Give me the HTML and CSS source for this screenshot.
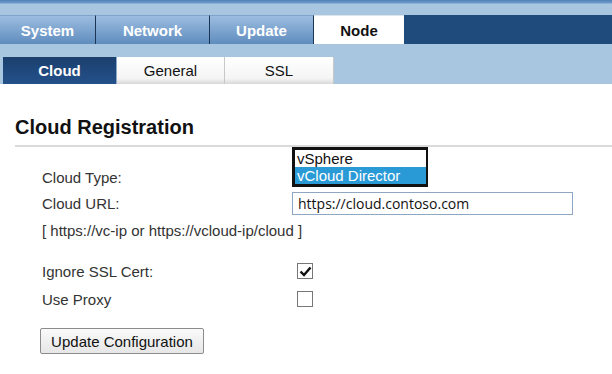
FILE: index.html
```html
<!DOCTYPE html>
<html lang="en">
<head>
  <meta charset="UTF-8">
  <title>Cloud Registration</title>
  <link rel="stylesheet" href="styles.css">
</head>
<body>
  <div class="header">
    <div class="top-strip"></div>
    <div class="main-tabs">
      <div class="tab tab-system">System</div>
      <div class="tab tab-network">Network</div>
      <div class="tab tab-update">Update</div>
      <div class="tab tab-node active">Node</div>
    </div>
    <div class="sub-band">
      <div class="sub-tabs">
        <div class="sub-tab active">Cloud</div>
        <div class="sub-tab">General</div>
        <div class="sub-tab">SSL</div>
      </div>
    </div>
  </div>

  <div class="content">
    <h2>Cloud Registration</h2>

    <div class="form-grid">
      <!-- Cloud type (dropdown shown open) -->
      <div class="label row-type">Cloud Type:</div>
      <div class="control row-type">
        <div class="listbox">
          <div class="option">vSphere</div>
          <div class="option selected">vCloud Director</div>
        </div>
      </div>

      <div class="label row-url">Cloud URL:</div>
      <div class="control row-url">
        <div class="text-input">https://cloud.contoso.com</div>
      </div>

      <div class="label hint">[ https://vc-ip or https://vcloud-ip/cloud ]</div>

      <div class="label row-check first">Ignore SSL Cert:</div>
      <div class="control row-check first">
        <span class="checkbox">
          <svg width="13" height="13" viewBox="0 0 13 13">
            <path d="M1.5 6.5 L5 10 L11.5 2.5" fill="none" stroke="#111" stroke-width="2.4"/>
          </svg>
        </span>
      </div>

      <div class="label row-check">Use Proxy</div>
      <div class="control row-check">
        <span class="checkbox"></span>
      </div>
    </div>

    <button class="submit">Update Configuration</button>
  </div>
</body>
</html>
```

FILE: styles.css
```css
* {
  margin: 0;
  padding: 0;
  box-sizing: border-box;
}

body {
  font-family: 'Liberation Sans', Arial, sans-serif;
  background: #fff;
  color: #333;
  width: 612px;
  height: 374px;
  overflow: hidden;
}

/* Header tabs */
.header {
  background: #a9c6e0;
}

.top-strip {
  height: 15px;
  background: linear-gradient(to bottom, #4f80b6 0, #6f9bcb 3px, #a9c6e0 4px, #a9c6e0 100%);
}

.main-tabs {
  display: flex;
  height: 29px;
  background: #1f4a7c;
}

.tab {
  display: flex;
  align-items: center;
  justify-content: center;
  color: #fff;
  font-weight: bold;
  font-size: 15px;
  background: linear-gradient(to bottom, #9cbde0, #5f8cbe);
  border-right: 1px solid #1c3554;
  border-top: 1px solid #7fa3cc;
}

.tab-system { width: 96px; }
.tab-network { width: 114px; }
.tab-update { width: 104px; }
.tab-node { width: 90px; }

.tab.active {
  background: #fff;
  color: #111;
  border-right: none;
  border-top: 1px solid #dde6ef;
}

.sub-band {
  height: 40px;
  padding: 13px 0 0 3px;
}

.sub-tabs {
  display: flex;
  height: 27px;
}

.sub-tab {
  display: flex;
  align-items: center;
  justify-content: center;
  width: 108px;
  font-size: 15px;
  color: #111;
  background: linear-gradient(to bottom, #ffffff, #f4f4f4 80%, #d8d8d8);
  border-right: 1px solid #c8c8c8;
}

.sub-tab:last-child { width: 109px; }

.sub-tab.active {
  width: 114px;
  color: #fff;
  font-weight: bold;
  background: linear-gradient(to bottom, #1b3f6e, #24518a);
  border-right: 1px solid #8aa8c8;
}

/* Content */
.content {
  padding: 32px 0 0 15px;
}

h2 {
  font-size: 20px;
  font-weight: bold;
  color: #111;
  line-height: 22px;
  padding-bottom: 7px;
  border-bottom: 2px solid #dadada;
}

.form-grid {
  display: grid;
  grid-template-columns: 250px 1fr;
  padding-left: 27px;
}

.label {
  font-size: 15px;
  color: #333;
  display: flex;
  align-items: center;
}

.control {
  display: flex;
  align-items: center;
}

.row-type { height: 42px; }
.label.row-type { align-items: flex-end; padding-bottom: 3px; }
.control.row-type { align-items: flex-start; }

.listbox {
  width: 136px;
  border: 3px solid #111;
  border-right-width: 2px;
  font-size: 15px;
  color: #111;
  line-height: 17px;
}

.option { padding-left: 2px; }

.option.selected {
  background: #2a9ad6;
  color: #fff;
}

.row-url { height: 28px; }

.text-input {
  width: 281px;
  height: 23px;
  border: 1px solid #8ea7c2;
  padding-left: 5px;
  font-family: 'Open Sans', 'DejaVu Sans', sans-serif;
  font-size: 14px;
  line-height: 21px;
  color: #111;
}

.hint {
  grid-column: 1 / 3;
  height: 26px;
}

.row-check { height: 28px; }
.row-check.first { margin-top: 14px; }

.checkbox {
  display: inline-flex;
  align-items: center;
  justify-content: center;
  width: 16px;
  height: 16px;
  margin-left: 5px;
  border: 1px solid #777;
  background: #fff;
}

.submit {
  margin: 15px 0 0 25px;
  width: 164px;
  height: 26px;
  font-family: 'Liberation Sans', Arial, sans-serif;
  font-size: 15px;
  color: #111;
  border: 1px solid #8c8c8c;
  border-radius: 2px;
  background: linear-gradient(to bottom, #fafafa, #e6e6e6);
}
```
